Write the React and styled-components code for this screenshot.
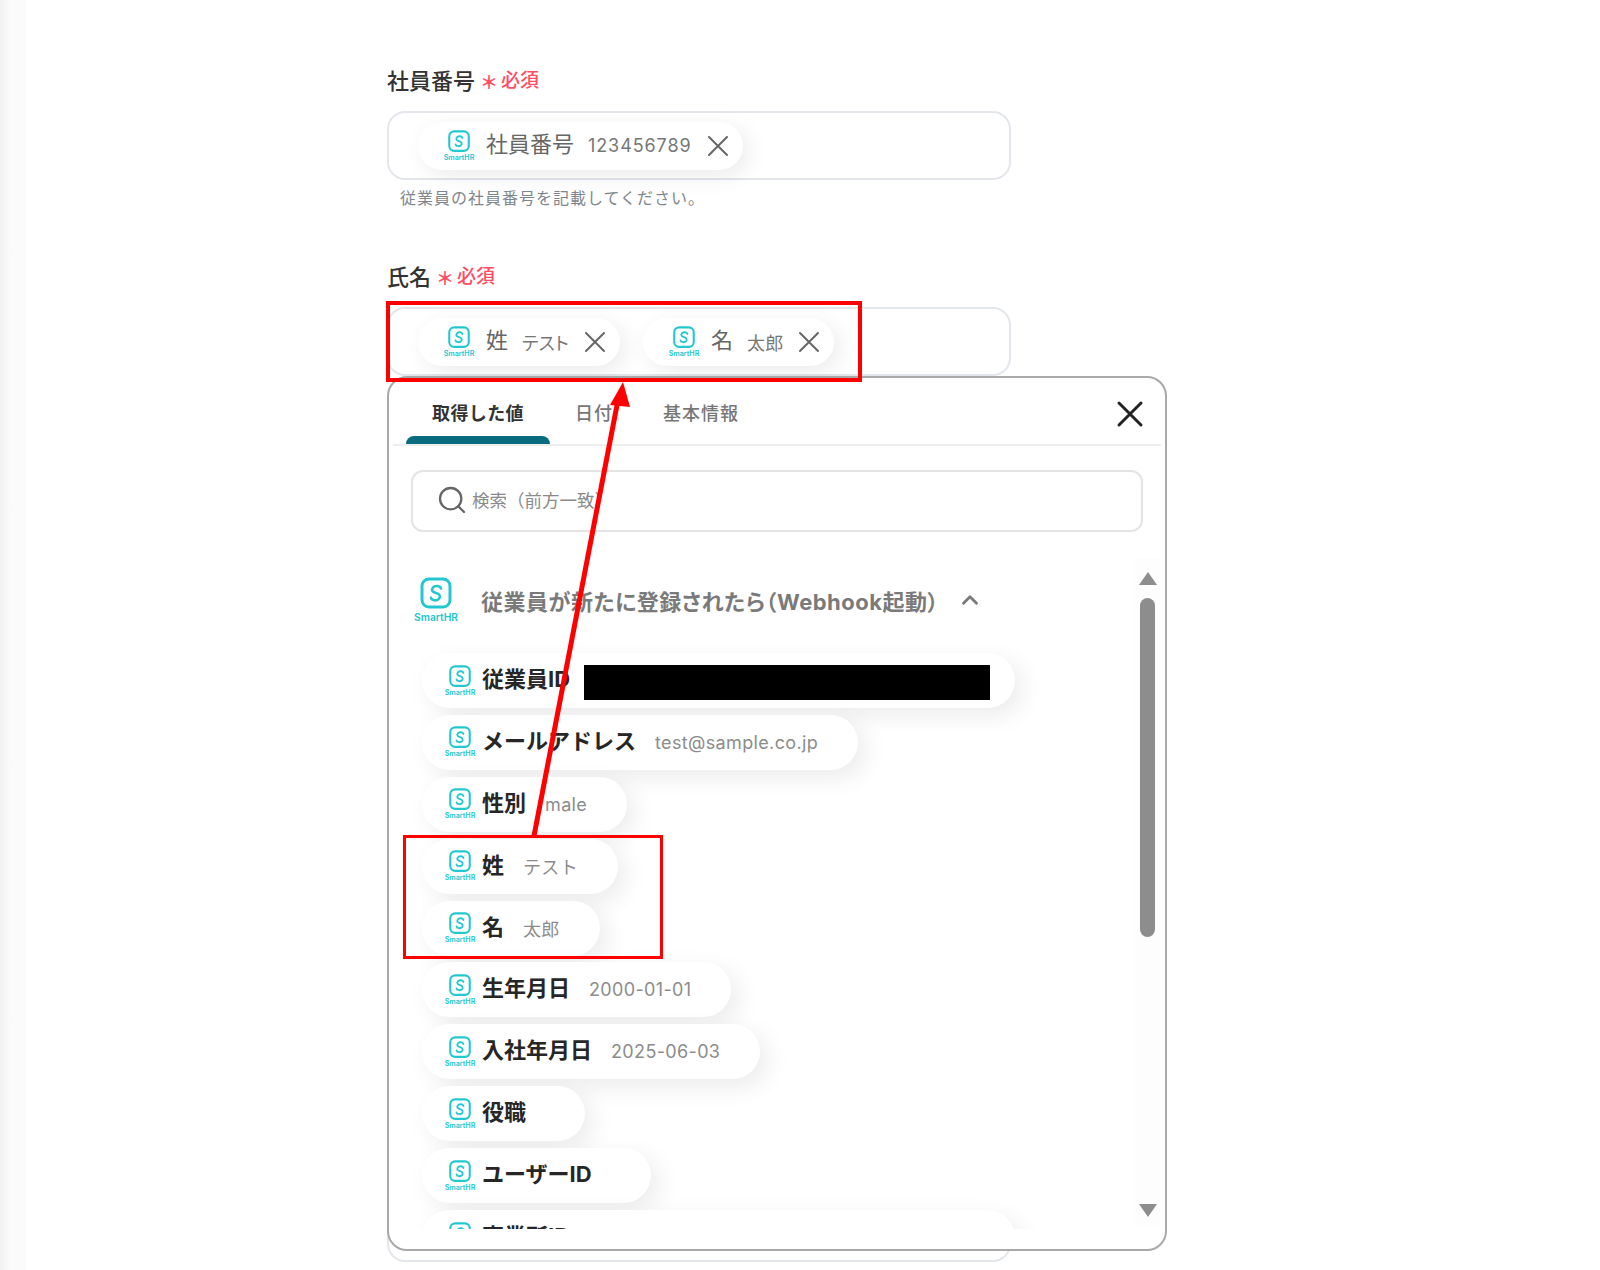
import React from 'react'
import styled, { createGlobalStyle } from 'styled-components'
import { Search, ChevronUp } from 'lucide-react'

const GlobalStyle = createGlobalStyle`
  html, body {
    margin: 0;
    background: #ffffff;
  }

  body {
    font-family: Inter, "Noto Sans CJK JP", "Noto Sans", sans-serif;
  }
`

const Shell = styled.div`
  display: flex;
  height: 1270px;
  overflow: hidden;
`

const Sidebar = styled.div`
  flex: 0 0 26px;
  background: linear-gradient(90deg, #f2f2f2 0, #fafafa 40%, #fbfbfb 100%);
`

const Main = styled.main`
  position: relative;
  flex: 1;
  padding: 62px 0 0 361px;
`

const Field = styled.section`
  width: 624px;
  margin-bottom: ${props => props.$gap || 0}px;
  padding-top: ${props => props.$top || 0}px;
`

const Label = styled.div`
  display: flex;
  align-items: center;
  box-sizing: border-box;
  height: 36px;
  margin-bottom: 13px;
  padding-bottom: 3px;
  font-size: 22px;
  font-weight: 500;
  color: #333333;
`

const Required = styled.span`
  display: inline-flex;
  align-items: center;
  margin-left: 5px;
  font-size: 19px;
  font-weight: 500;
  color: #ff4d63;
`

const Star = styled.span`
  margin-right: 3px;
  font-size: 18px;
  font-weight: 700;
  padding-top: 4px;
`

const InputBox = styled.div`
  display: flex;
  align-items: center;
  gap: 23px;
  box-sizing: border-box;
  height: 69px;
  padding-left: 29px;
  border: 2px solid #e3e7ec;
  border-radius: 18px;
  background: #ffffff;
`

const Help = styled.p`
  margin: 6px 0 0 13px;
  font-size: 16px;
  line-height: 24px;
  letter-spacing: 1px;
  color: #7d868c;
`

const SelectedChip = styled.div`
  display: flex;
  align-items: center;
  box-sizing: border-box;
  height: 48px;
  padding: 0 16px 0 25px;
  border-radius: 24px;
  background: #ffffff;
  box-shadow: 6px 6px 22px rgba(0, 0, 0, 0.08);
`

const SelectedLabel = styled.span`
  margin-left: 11px;
  padding-bottom: 7px;
  font-size: 22px;
  color: #666666;
`

const SelectedValue = styled.span`
  margin: 0 17px 0 14px;
  font-size: 18px;
  font-feature-settings: "palt";
  letter-spacing: ${props => (props.$tight ? 0.2 : 0.9)}px;
  color: #777777;
`

const SelectedClose = styled.span`
  display: flex;
  color: #666666;
`

const Popup = styled.div`
  position: absolute;
  top: 376px;
  left: 361px;
  width: 780px;
  height: 875px;
  box-sizing: border-box;
  border: 2px solid #a9a9a9;
  border-radius: 20px;
  background: #ffffff;
  overflow: hidden;
`

const TabBar = styled.div`
  display: flex;
  align-items: stretch;
  height: 66px;
  margin: 0 4px;
  padding-left: 13px;
  border-bottom: 2px solid #eeeeee;
`

const Tab = styled.div`
  position: relative;
  display: flex;
  align-items: center;
  padding: 2px ${props => (props.$active ? 26 : 25)}px 0;
  font-size: 18px;
  font-weight: ${props => (props.$active ? 700 : 500)};
  letter-spacing: ${props => (props.$active ? 0.4 : 1)}px;
  color: ${props => (props.$active ? '#333333' : '#777777')};

  &::after {
    content: "";
    display: ${props => (props.$active ? 'block' : 'none')};
    position: absolute;
    left: 0;
    right: 0;
    bottom: 0;
    height: 8px;
    border-radius: 8px 8px 0 0;
    background: #0b6b7f;
  }
`

const CloseButton = styled.div`
  display: flex;
  align-items: center;
  margin-left: auto;
  padding: 6px 20px 0 0;
  color: #222222;
`

const SearchBox = styled.div`
  display: flex;
  align-items: center;
  gap: 4px;
  box-sizing: border-box;
  height: 62px;
  margin: 24px 22px 0;
  padding: 0 0 3px 23px;
  border: 2px solid #e4e4e4;
  border-radius: 12px;
  font-size: 17.5px;
  color: #8a8a8a;
  svg {
    color: #666666;
  }
`

const ScrollArea = styled.div`
  display: flex;
  height: 671px;
  margin-top: 26px;
`

const List = styled.div`
  flex: 1;
  min-width: 0;
  overflow: hidden;
`

const SectionHead = styled.div`
  display: flex;
  align-items: center;
  height: 72px;
  margin: 0 0 17px 24px;
  padding-top: 6px;
  font-size: 22px;
  font-weight: 700;
  color: #7a7a7a;
`

const SectionTitle = styled.span`
  margin: 0 18px 0 22px;
  font-feature-settings: "palt";
  letter-spacing: 0.5px;
`

const Items = styled.div`
  display: flex;
  flex-direction: column;
  align-items: flex-start;
  gap: 6.9px;
  padding-left: 33px;
`

const Chip = styled.div`
  display: flex;
  flex: 0 0 55px;
  align-items: center;
  box-sizing: border-box;
  height: 55px;
  padding: 0 40px 0 22px;
  border-radius: 28px;
  background: #ffffff;
  box-shadow: 8px 8px 24px rgba(0, 0, 0, 0.08);
`

const ChipLabel = styled.span`
  margin-left: 6px;
  padding-bottom: 7px;
  font-size: 22px;
  font-weight: 700;
  color: #262626;
`

const ChipValue = styled.span`
  margin-left: 19px;
  font-size: 18px;
  letter-spacing: 0.35px;
  color: #8c8c8c;
`

const Redacted = styled.span`
  width: 406px;
  height: 35px;
  margin: 4px -15px 0 14px;
  background: #000000;
`

const Track = styled.div`
  display: flex;
  flex: 0 0 25px;
  flex-direction: column;
  align-items: center;
  margin-right: 5px;
  padding: 14px 0 12px;
  box-sizing: border-box;
  background: #fdfdfd;
`

const ArrowUp = styled.div`
  width: 0;
  height: 0;
  border-left: 9px solid transparent;
  border-right: 9px solid transparent;
  border-bottom: 13px solid #8d8d8d;
`

const ArrowDown = styled(ArrowUp)`
  margin-top: auto;
  transform: rotate(180deg);
`

const Thumb = styled.div`
  width: 15px;
  height: 339px;
  margin-top: 13px;
  border-radius: 8px;
  background: #8d8d8d;
`

const NameHighlight = styled.div`
  position: absolute;
  top: 301px;
  left: 360px;
  width: 476px;
  height: 81px;
  box-sizing: border-box;
  border: 4px solid #ff0000;
`

const ListHighlight = styled.div`
  position: absolute;
  top: 835px;
  left: 377px;
  width: 260px;
  height: 124px;
  box-sizing: border-box;
  border: 3px solid #ff0000;
`

const ArrowOverlay = styled.svg`
  position: absolute;
  top: 370px;
  left: 454px;
`

const LogoMark = styled.svg`
  flex: none;
`

const Logo = ({ size = 32 }) => (
  <LogoMark width={size} height={size} viewBox="0 0 46 46">
    <rect x="9" y="2" width="28" height="28" rx="7" fill="none" stroke="#22c7cf" strokeWidth="3" />
    <path
      d="M28 11.5c-.8-2.8-6.2-3.6-8.2-.8-1.8 2.6-.2 4.6 3.2 5.4s5 2.9 3.2 5.5c-2 2.8-7.4 2-8.2-.8"
      fill="none"
      stroke="#22c7cf"
      strokeWidth="2.6"
      strokeLinecap="round"
    />
    <text
      x="1"
      y="43.5"
      textLength="44"
      lengthAdjust="spacingAndGlyphs"
      fontSize="10.5"
      fontWeight="600"
      fill="#22c7cf"
      fontFamily="Inter, sans-serif"
    >
      SmartHR
    </text>
  </LogoMark>
)

const CloseMark = styled.svg`
  flex: none;
  overflow: visible;
`

const CloseIcon = ({ size = 18, width = 2 }) => (
  <CloseMark width={size} height={size} viewBox={`0 0 ${size} ${size}`}>
    <path d={`M0 0L${size} ${size}M${size} 0L0 ${size}`} stroke="currentColor" strokeWidth={width} strokeLinecap="round" />
  </CloseMark>
)

const Selected = ({ label, value, tight }) => (
  <SelectedChip>
    <Logo />
    <SelectedLabel>{label}</SelectedLabel>
    <SelectedValue $tight={tight}>{value}</SelectedValue>
    <SelectedClose><CloseIcon /></SelectedClose>
  </SelectedChip>
)

const items = [
  { label: '従業員ID', redacted: true },
  { label: 'メールアドレス', value: 'test@sample.co.jp' },
  { label: '性別', value: 'male' },
  { label: '姓', value: 'テスト' },
  { label: '名', value: '太郎' },
  { label: '生年月日', value: '2000-01-01' },
  { label: '入社年月日', value: '2025-06-03' },
  { label: '役職' },
  { label: 'ユーザーID' },
  { label: '事業所ID', value: '68008f70-e0ba-4028-8c7c-44cc8002f5e7' },
]

const App = () => (
  <Shell>
    <GlobalStyle />
    <Sidebar />
    <Main>
      <Field>
        <Label>社員番号<Required><Star>＊</Star>必須</Required></Label>
        <InputBox>
          <Selected label="社員番号" value="123456789" />
        </InputBox>
        <Help>従業員の社員番号を記載してください。</Help>
      </Field>
      <Field $top={48} $gap={817}>
        <Label>氏名<Required><Star>＊</Star>必須</Required></Label>
        <InputBox>
          <Selected label="姓" value="テスト" tight />
          <Selected label="名" value="太郎" tight />
        </InputBox>
      </Field>
      <Field>
        <InputBox />
      </Field>
      <Popup>
        <TabBar>
          <Tab $active>取得した値</Tab>
          <Tab>日付</Tab>
          <Tab>基本情報</Tab>
          <CloseButton><CloseIcon size={22} width={3} /></CloseButton>
        </TabBar>
        <SearchBox>
          <Search size={32} strokeWidth={1.7} />
          検索（前方一致）
        </SearchBox>
        <ScrollArea>
          <List>
            <SectionHead>
              <Logo size={46} />
              <SectionTitle>従業員が新たに登録されたら（Webhook起動）</SectionTitle>
              <ChevronUp size={26} strokeWidth={2.6} />
            </SectionHead>
            <Items>
              {items.map(item => (
                <Chip key={item.label}>
                  <Logo />
                  <ChipLabel>{item.label}</ChipLabel>
                  {item.redacted ? <Redacted /> : <ChipValue>{item.value}</ChipValue>}
                </Chip>
              ))}
            </Items>
          </List>
          <Track>
            <ArrowUp />
            <Thumb />
            <ArrowDown />
          </Track>
        </ScrollArea>
      </Popup>
      <NameHighlight />
      <ListHighlight />
      <ArrowOverlay width="170" height="480" viewBox="0 0 170 480">
        <line x1="54" y1="466" x2="138" y2="30" stroke="#ff0000" strokeWidth="5" />
        <polygon points="143,12 130,35 150,37" fill="#ff0000" />
      </ArrowOverlay>
    </Main>
  </Shell>
)

export default App
